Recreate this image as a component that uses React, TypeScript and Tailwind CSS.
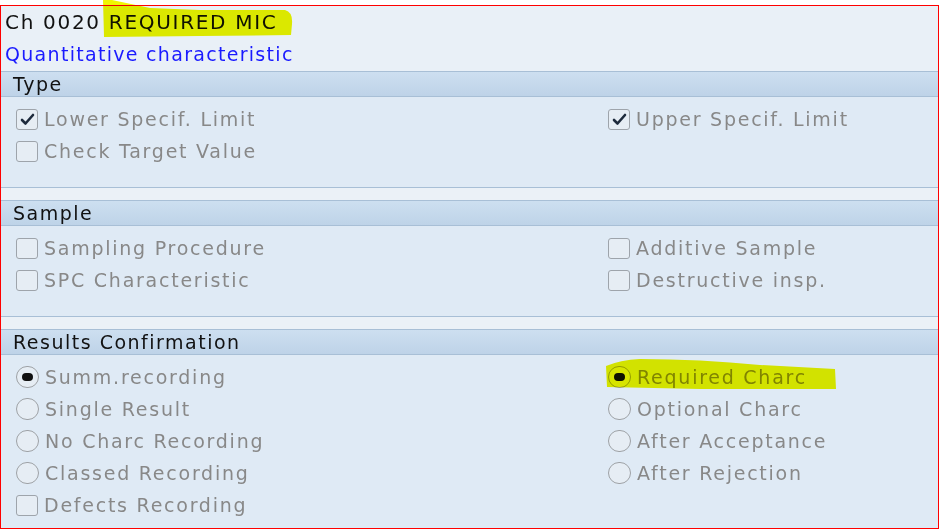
import React from 'react'

type Item = { label: string; kind: 'check' | 'radio'; on?: boolean }

const CheckBox = ({ on }: { on?: boolean }) => (
    <span className="w-[22px] h-[21px] shrink-0 rounded-[3px] border border-[#9ea4ab] bg-[#e6edf4] flex items-center justify-center">
        {on ? (
            <svg width="15" height="13" viewBox="0 0 15 13">
                <path d="M2 7 L5.5 10.5 L13 2" fill="none" stroke="#1d2a3c" strokeWidth="2.6" strokeLinecap="round" strokeLinejoin="round" />
            </svg>
        ) : null}
    </span>
)

const Radio = ({ on }: { on?: boolean }) => (
    <span className="w-[23px] h-[22px] shrink-0 rounded-full border-[1.5px] border-[#9ea2a6] bg-[#e6edf4] flex items-center justify-center">
        {on ? <span className="w-[11px] h-[8px] rounded-full bg-[#111]" /> : null}
    </span>
)

const Field = ({ item }: { item: Item }) => (
    <div className="h-[32px] flex items-center gap-[6px]">
        {item.kind === 'check' ? <CheckBox on={item.on} /> : <Radio on={item.on} />}
        <span className="text-[19px] text-[#888888] tracking-[1.75px] whitespace-nowrap">{item.label}</span>
    </div>
)

const Section = ({ title, left, right, last }: { title: string; left: Item[]; right: Item[]; last?: boolean }) => (
    <div className="flex flex-col">
        <div className="h-[26px] border-y border-[#a8bfd6] bg-gradient-to-b from-[#cddff0] to-[#bed3e8] flex items-center pl-[12px]">
            <span className="text-[19px] text-[#111] tracking-[1.5px]">{title}</span>
        </div>
        <div className={`bg-[#dfeaf5] pt-[6px] flex ${last ? 'pb-[5px]' : 'pb-[20px] border-b border-[#a8bfd6]'}`}>
            <div className="w-[607px] pl-[15px] flex flex-col">
                {left.map((it) => <Field key={it.label} item={it} />)}
            </div>
            <div className="flex flex-col">
                {right.map((it) => <Field key={it.label} item={it} />)}
            </div>
        </div>
    </div>
)

export default function App() {
    return (
        <div className="relative w-[940px] h-[530px] bg-white overflow-hidden" style={{ fontFamily: '"DejaVu Sans", Verdana, sans-serif' }}>
            <div className="mt-[5px] w-[939px] h-[524px] border border-[#ff0000] bg-[#e9f0f7] flex flex-col">
                <div className="h-[65px] pl-[4px] flex flex-col">
                    <div className="h-[32px] flex items-center text-[20px] text-[#111] tracking-[1.7px] whitespace-nowrap">Ch 0020 REQUIRED MIC</div>
                    <div className="h-[32px] flex items-center text-[19px] text-[#1a1aff] tracking-[1.3px] whitespace-nowrap">Quantitative characteristic</div>
                </div>
                <Section
                    title="Type"
                    left={[
                        { label: 'Lower Specif. Limit', kind: 'check', on: true },
                        { label: 'Check Target Value', kind: 'check' },
                    ]}
                    right={[{ label: 'Upper Specif. Limit', kind: 'check', on: true }]}
                />
                <div className="h-[12px] bg-[#ebf1f7]" />
                <Section
                    title="Sample"
                    left={[
                        { label: 'Sampling Procedure', kind: 'check' },
                        { label: 'SPC Characteristic', kind: 'check' },
                    ]}
                    right={[
                        { label: 'Additive Sample', kind: 'check' },
                        { label: 'Destructive insp.', kind: 'check' },
                    ]}
                />
                <div className="h-[12px] bg-[#ebf1f7]" />
                <div className="flex-1 bg-[#dfeaf5]">
                    <Section
                        last
                        title="Results Confirmation"
                        left={[
                            { label: 'Summ.recording', kind: 'radio', on: true },
                            { label: 'Single Result', kind: 'radio' },
                            { label: 'No Charc Recording', kind: 'radio' },
                            { label: 'Classed Recording', kind: 'radio' },
                            { label: 'Defects Recording', kind: 'check' },
                        ]}
                        right={[
                            { label: 'Required Charc', kind: 'radio', on: true },
                            { label: 'Optional Charc', kind: 'radio' },
                            { label: 'After Acceptance', kind: 'radio' },
                            { label: 'After Rejection', kind: 'radio' },
                        ]}
                    />
                </div>
            </div>
            {/* highlighter marks */}
            <svg className="absolute left-0 top-0 pointer-events-none mix-blend-multiply" width="940" height="530">
                <path d="M103 0 L112 0 L150 8 L200 10 L285 10 Q293 12 292 24 L291 35 L200 36 L104 37 Z" fill="#f0f700" />
                <path d="M606 366 Q620 360 640 359 Q700 359 760 365 L835 369 L836 389 L700 389 L607 387 Z" fill="#f0f700" />
            </svg>
        </div>
    )
}
